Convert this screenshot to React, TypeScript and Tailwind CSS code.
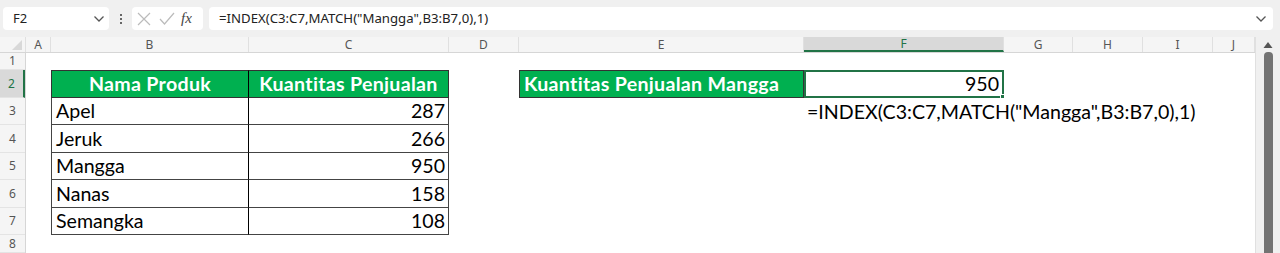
import React from "react";

const cols = ["A", "B", "C", "D", "E", "F", "G", "H", "I", "J"];
const colW = [25, 198, 200, 70, 285, 200, 69, 70, 70, 42];
const rowH = [17, 28, 27, 28, 27, 28, 27, 18];

const data: [string, number][] = [
  ["Apel", 287],
  ["Jeruk", 266],
  ["Mangga", 950],
  ["Nanas", 158],
  ["Semangka", 108],
];

const cellFont = { fontFamily: "Lato, 'Open Sans', sans-serif" };

export default function App() {
  return (
    <div className="w-[1280px] h-[253px] overflow-hidden bg-white relative" style={{ fontFamily: "'Segoe UI', 'Noto Sans', sans-serif" }}>
      {/* Formula bar */}
      <div className="h-[37px] bg-[#f0f0f0] flex items-center px-[3px] gap-0">
        <div className="w-[106px] h-[23px] bg-white rounded-[4px] flex items-center justify-between pl-[10px] pr-[4px] text-[13px] text-[#222]">
          <span>F2</span>
          <svg width="12" height="8" viewBox="0 0 12 8"><path d="M1.5 1.5 L6 6 L10.5 1.5" stroke="#555" strokeWidth="1.3" fill="none" /></svg>
        </div>
        <div className="w-[22px] flex flex-col items-center gap-[2px] ml-[1px]">
          <div className="w-[2px] h-[2px] bg-[#666]" />
          <div className="w-[2px] h-[2px] bg-[#666]" />
          <div className="w-[2px] h-[2px] bg-[#666]" />
        </div>
        <div className="w-[71px] h-[23px] bg-white rounded-[4px] flex items-center pl-[5px] gap-[8px]">
          <svg width="14" height="14" viewBox="0 0 14 14"><path d="M1 1 L13 13 M13 1 L1 13" stroke="#bbb" strokeWidth="1.2" /></svg>
          <svg width="16" height="14" viewBox="0 0 16 14"><path d="M1 7 L5.5 12 L15 1" stroke="#bbb" strokeWidth="1.2" fill="none" /></svg>
          <span className="text-[15px] italic text-[#444] -ml-[2px]" style={{ fontFamily: "'Liberation Serif', serif" }}>fx</span>
        </div>
        <div className="ml-[6px] w-[1064px] h-[23px] bg-white rounded-[4px] flex items-center justify-between pl-[10px] pr-[6px] text-[13.2px] text-[#222]">
          <span>=INDEX(C3:C7,MATCH("Mangga",B3:B7,0),1)</span>
          <svg width="12" height="8" viewBox="0 0 12 8"><path d="M1.5 1.5 L6 6 L10.5 1.5" stroke="#555" strokeWidth="1.3" fill="none" /></svg>
        </div>
      </div>

      {/* Sheet */}
      <div className="flex">
        <div className="flex flex-col">
          {/* Column headers */}
          <div className="flex h-[16px] bg-[#f5f5f5] border-b border-[#d6d6d6]">
            <div className="w-[26px] h-full border-r border-[#e0e0e0] flex items-end justify-end pr-[3px] pb-[2px]">
              <svg width="10" height="10" viewBox="0 0 10 10"><path d="M10 0 L10 10 L0 10 Z" fill="#d8d8d8" /></svg>
            </div>
            {cols.map((c, i) => (
              <div
                key={c}
                className={`h-full flex items-center justify-center text-[12px] border-r border-[#e0e0e0] ${c === "F" ? "bg-[#d9d9d9] text-[#217346] border-b-2 border-b-[#217346]" : "text-[#555]"}`}
                style={{ width: colW[i] }}
              >
                {c}
              </div>
            ))}
          </div>
          {/* Rows */}
          <div className="flex">
            <div className="w-[26px] flex flex-col bg-[#f5f5f5] border-r border-[#d6d6d6]">
              {rowH.map((h, i) => (
                <div
                  key={i}
                  className={`flex items-center justify-center text-[12px] border-b border-[#e4e4e4] ${i === 1 ? "bg-[#d9d9d9] text-[#217346] border-r-2 border-r-[#217346]" : "text-[#555]"}`}
                  style={{ height: h }}
                >
                  {i + 1}
                </div>
              ))}
            </div>
            <div className="flex flex-col text-[19.6px] text-black" style={cellFont}>
              <div className="h-[17px]" />
              {/* Row 2 */}
              <div className="flex h-[28px]">
                <div className="w-[25px]" />
                <div className="w-[198px] bg-[#00b050] border-t border-l border-b border-[#333] border-r border-r-black flex items-center justify-center text-white font-bold tracking-[0.3px]">Nama Produk</div>
                <div className="w-[200px] bg-[#00b050] border-t border-r border-b border-[#333] flex items-center justify-center text-white font-bold tracking-[0.3px]">Kuantitas Penjualan</div>
                <div className="w-[70px]" />
                <div className="w-[285px] bg-[#00b050] border border-[#333] flex items-center pl-[4px] text-white font-bold tracking-[0.3px]">Kuantitas Penjualan Mangga</div>
                <div className="w-[200px] border-2 border-[#217346] flex items-center justify-end pr-[3px] relative">
                  950
                  <div className="absolute -right-[3px] -bottom-[3px] w-[5px] h-[5px] bg-[#217346] border border-white" />
                </div>
              </div>
              {data.map(([n, v], i) => (
                <div key={n} className="flex" style={{ height: rowH[i + 2] }}>
                  <div className="w-[25px]" />
                  <div className="w-[198px] border-l border-b border-[#444] border-r border-r-black flex items-center pl-[4px]">{n}</div>
                  <div className="w-[200px] border-r border-b border-[#444] flex items-center justify-end pr-[3px]">{v}</div>
                  {i === 0 && (
                    <>
                      <div className="w-[355px]" />
                      <div className="flex items-center pl-[3px] whitespace-nowrap">=INDEX(C3:C7,MATCH("Mangga",B3:B7,0),1)</div>
                    </>
                  )}
                </div>
              ))}
              <div className="h-[18px]" />
            </div>
          </div>
        </div>
        {/* Scrollbar */}
        <div className="w-[25px] bg-[#f0f0f0] border-l border-[#e0e0e0] flex flex-col items-center pt-[4px]">
          <svg width="10" height="8" viewBox="0 0 10 8"><path d="M5 1 L9.5 7 L0.5 7 Z" fill="#555" /></svg>
          <div className="mt-[3px] w-[9px] flex-1 bg-[#737373] rounded-t-[4px]" />
        </div>
      </div>
    </div>
  );
}
